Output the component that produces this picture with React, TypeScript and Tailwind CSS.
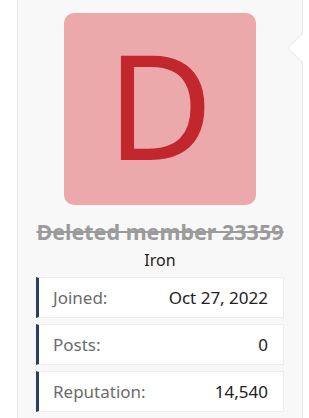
import React from 'react';

const STATS = [
  { label: 'Joined:', value: 'Oct 27, 2022' },
  { label: 'Posts:', value: '0' },
  { label: 'Reputation:', value: '14,540' },
];

const App = () => {
  return (
    <div className="w-[309px] h-[418px] bg-white overflow-hidden" style={{ fontFamily: '"Noto Sans", "Open Sans", sans-serif' }}>
      <div className="relative ml-[17px] w-[286px] h-[418px] bg-[#f8f8f8] border-l border-r border-[#e6e6e6]">
        {/* arrow pointing at the post */}
        <div className="absolute right-[-1px] top-[33px] w-0 h-0 border-y-[15px] border-y-transparent border-r-[16px] border-r-[#e6e6e6]">
          <div className="absolute top-[-14px] left-[1px] w-0 h-0 border-y-[14px] border-y-transparent border-r-[15px] border-r-white" />
        </div>

        <div className="flex flex-col items-center pt-[13px]">
          <div className="w-[192px] h-[192px] rounded-[10px] bg-[#eba9ab] flex items-center justify-center">
            <span className="text-[#c1272d] text-[146px] leading-none font-normal" style={{ marginTop: '-10px' }}>D</span>
          </div>

          <h4 className="mt-[15px] text-[21.5px] leading-[24px] font-bold text-[#9b9b9b] line-through">
            Deleted member 23359
          </h4>
          <div className="mt-[6px] text-[16px] leading-[20px] text-[#222]">Iron</div>
        </div>

        <div className="mt-[7px] ml-[18px] mr-[18px] flex flex-col gap-[6px]">
          {STATS.map(stat => (
            <div
              key={stat.label}
              className="flex items-center justify-between h-[41px] bg-white border border-[#ededed] border-l-[3px] border-l-[#2b3c66] pl-[14px] pr-[15px] text-[17px]"
            >
              <span className="text-[#6b6b6b]">{stat.label}</span>
              <span className="text-[#222]">{stat.value}</span>
            </div>
          ))}
        </div>
      </div>
    </div>
  );
};

export default App;
